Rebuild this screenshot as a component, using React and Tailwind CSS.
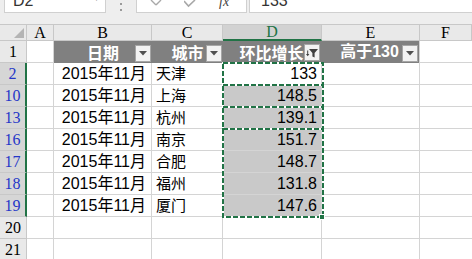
import React from "react";

const rows = [
  { n: 2, city: "天津", v: "133" },
  { n: 10, city: "上海", v: "148.5" },
  { n: 13, city: "杭州", v: "139.1" },
  { n: 16, city: "南京", v: "151.7" },
  { n: 17, city: "合肥", v: "148.7" },
  { n: 18, city: "福州", v: "131.8" },
  { n: 19, city: "厦门", v: "147.6" },
];

const cellFont = { fontFamily: '"Liberation Sans", "Noto Sans CJK SC", sans-serif' };
const headFont = { fontFamily: '"Liberation Serif", "DejaVu Serif", serif' };

function DropButton() {
  return (
    <div className="absolute right-[1px] top-[4px] flex h-[17px] w-[16px] items-center justify-center border border-[#a6a6a6] bg-[#f2f2f2]">
      <svg width="8" height="5" viewBox="0 0 8 5">
        <path d="M0 0 H8 L4 4.5 Z" fill="#505050" />
      </svg>
    </div>
  );
}

function FilterButton() {
  return (
    <div className="absolute right-[2px] top-[3px] flex h-[17px] w-[16px] items-center justify-center border border-[#a6a6a6] bg-[#f2f2f2]">
      <svg width="12" height="11" viewBox="0 0 12 11">
        <path d="M3 2 H12 L8.6 6 V10.5 L6.4 9.5 V6 Z" fill="#404040" />
        <path d="M0 7 H3.4 L1.7 9.2 Z" fill="#404040" />
        <rect x="1.2" y="3.5" width="1" height="3.5" fill="#404040" />
      </svg>
    </div>
  );
}

function ColHead({ w, label, active }) {
  return (
    <div
      className={`${w} flex shrink-0 items-center justify-center border-r border-[#c8c8c8] text-[16px] ${
        active
          ? "border-b-2 border-b-[#217346] bg-[#d2d2d2] text-[#217346]"
          : "border-b border-b-[#c8c8c8] bg-[#e9e9e9] text-black"
      }`}
      style={headFont}
    >
      {label}
    </div>
  );
}

function RowHead({ n, sel }) {
  return (
    <div
      className={`flex w-[27px] shrink-0 items-end justify-center pb-[1px] text-[16px] leading-[18px] border-b border-b-[#c8c8c8] ${
        sel
          ? "border-r-2 border-r-[#217346] bg-[#d6d6d6] text-[#2536c8]"
          : "border-r border-r-[#c8c8c8] bg-[#e9e9e9] text-black"
      }`}
      style={headFont}
    >
      {n}
    </div>
  );
}

export default function App() {
  return (
    <div className="h-[259px] w-[472px] overflow-hidden bg-[#eeeeee]" style={cellFont}>

      {/* formula bar */}
      <div className="flex h-[24px] items-start">
        <div className="ml-[4px] flex h-[13px] w-[102px] items-start overflow-hidden border-x border-b border-[#d0d0d0] bg-white text-[16px] leading-[16px] text-[#333]">
          <span className="-mt-[7px] ml-[8px]">D2</span>
          <span className="ml-auto mr-[6px] -mt-[10px] text-[10px] text-[#777]">▾</span>
        </div>
        <div className="ml-[13px] flex h-[13px] w-[4px] flex-col items-center gap-[4px] pt-[3px]">
          <div className="h-[2px] w-[2px] bg-[#9a9a9a]" />
          <div className="h-[2px] w-[2px] bg-[#9a9a9a]" />
        </div>
        <div className="ml-[13px] flex h-[13px] w-[111px] items-start overflow-hidden border-x border-b border-[#d0d0d0] bg-white text-[#a0a0a0]">
          <svg className="ml-[13px]" width="12" height="7" viewBox="0 0 12 7">
            <path d="M1 0 L6 5 M11 0 L6 5" stroke="#a8a8a8" strokeWidth="1.4" fill="none" />
          </svg>
          <svg className="ml-[22px]" width="12" height="8" viewBox="0 0 12 8">
            <path d="M0 1 L4.5 6 L11 0" stroke="#a8a8a8" strokeWidth="1.6" fill="none" />
          </svg>
          <span
            className="ml-[23px] -mt-[6px] text-[14px] italic leading-[16px] text-[#444]"
            style={headFont}
          >
            fx
          </span>
        </div>
        <div className="ml-[2px] flex h-[13px] flex-1 items-start overflow-hidden border-l border-b border-[#d0d0d0] bg-white text-[16px] leading-[16px] text-[#333]">
          <span className="-mt-[7px] ml-[11px]">133</span>
        </div>
      </div>

      {/* column headers */}
      <div className="flex h-[17px] border-t border-[#c8c8c8]">
        <div className="relative w-[27px] shrink-0 border-r border-b border-[#c8c8c8] bg-[#e9e9e9]">
          <svg className="absolute bottom-[2px] right-[2px]" width="10" height="10" viewBox="0 0 10 10">
            <path d="M10 0 V10 H0 Z" fill="#b4b4b4" />
          </svg>
        </div>
        <ColHead w="w-[27px]" label="A" />
        <ColHead w="w-[98px]" label="B" />
        <ColHead w="w-[71px]" label="C" />
        <ColHead w="w-[99px]" label="D" active />
        <ColHead w="w-[98px]" label="E" />
        <ColHead w="flex-1" label="F" />
      </div>

      {/* sheet */}
      <div className="relative">

        {/* header row 1 */}
        <div className="flex h-[22px]">
          <RowHead n={1} />
          <div className="w-[27px] shrink-0 border-r border-b border-[#d4d4d4] bg-white" />
          <div className="relative flex w-[98px] shrink-0 items-center justify-center bg-[#808080] text-[16px] font-bold text-white" style={{ fontFamily: '"Noto Sans CJK SC", sans-serif' }}>
            日期
            <DropButton />
          </div>
          <div className="relative flex w-[71px] shrink-0 items-center justify-center bg-[#808080] text-[16px] font-bold text-white" style={{ fontFamily: '"Noto Sans CJK SC", sans-serif' }}>
            城市
            <DropButton />
          </div>
          <div className="relative flex w-[99px] shrink-0 items-center justify-center bg-[#808080] text-[16px] font-bold text-white" style={{ fontFamily: '"Noto Sans CJK SC", sans-serif' }}>
            <span className="pr-[2px]">环比增长</span>
            <FilterButton />
          </div>
          <div className="relative flex w-[98px] shrink-0 items-center justify-center border-r border-[#d4d4d4] bg-[#808080] text-[16px] font-bold text-white" style={{ fontFamily: '"Liberation Sans", "Noto Sans CJK SC", sans-serif' }}>
            <span className="pr-[2px]">高于130</span>
            <DropButton />
          </div>
          <div className="flex-1 border-b border-[#d4d4d4] bg-white" />
        </div>

        {/* data rows */}
        {rows.map((r) => (
          <div key={r.n} className="flex h-[22px] text-[16px] text-black">
            <RowHead n={r.n} sel />
            <div className="w-[27px] shrink-0 border-r border-b border-[#d4d4d4] bg-white" />
            <div className="flex w-[98px] shrink-0 items-center justify-end border-r border-b border-[#d4d4d4] bg-white pr-[5px]">
              2015年11月
            </div>
            <div className="flex w-[71px] shrink-0 items-center border-r border-b border-[#d4d4d4] bg-white pl-[4px] text-[15px]" style={{ fontFamily: '"Noto Sans CJK SC", sans-serif' }}>
              {r.city}
            </div>
            <div
              className={`flex w-[99px] shrink-0 items-center justify-end border-r border-b border-[#d4d4d4] pr-[4px] ${
                r.n === 2 ? "bg-white" : "bg-[#c9c9c9]"
              }`}
            >
              {r.v}
            </div>
            <div className="w-[98px] shrink-0 border-r border-b border-[#d4d4d4] bg-white" />
            <div className="flex-1 border-b border-[#d4d4d4] bg-white" />
          </div>
        ))}

        {[20, 21].map((n) => (
          <div key={n} className="flex h-[22px]">
            <RowHead n={n} />
            <div className="w-[27px] shrink-0 border-r border-b border-[#d4d4d4] bg-white" />
            <div className="w-[98px] shrink-0 border-r border-b border-[#d4d4d4] bg-white" />
            <div className="w-[71px] shrink-0 border-r border-b border-[#d4d4d4] bg-white" />
            <div className="w-[99px] shrink-0 border-r border-b border-[#d4d4d4] bg-white" />
            <div className="w-[98px] shrink-0 border-r border-b border-[#d4d4d4] bg-white" />
            <div className="flex-1 border-b border-[#d4d4d4] bg-white" />
          </div>
        ))}

        {/* copy marquee over D2, D10, D13, D16:D19 */}
        <svg
          className="pointer-events-none absolute left-[222px] top-[21px]"
          width="104"
          height="158"
          viewBox="0 0 104 158"
        >
          {[
            [0, 22],
            [22, 22],
            [44, 22],
            [66, 88],
          ].map(([y, h]) => (
            <g key={y}>
              <rect x="1" y={y + 1} width="100" height={h} fill="none" stroke="#ffffff" strokeWidth="2" />
              <rect x="1" y={y + 1} width="100" height={h} fill="none" stroke="#217346" strokeWidth="2" strokeDasharray="5 2" />
            </g>
          ))}
          <rect x="97.5" y="152.5" width="5" height="5" fill="#217346" stroke="#ffffff" strokeWidth="1" />
        </svg>
      </div>
    </div>
  );
}
